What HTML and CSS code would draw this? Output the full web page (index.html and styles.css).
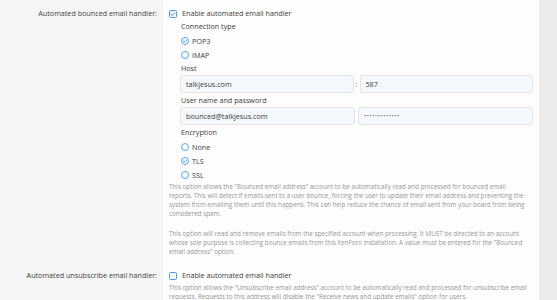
FILE: index.html
```html
<!DOCTYPE html>
<html lang="en">
<head>
<meta charset="utf-8">
<title>Email handler options</title>
<link rel="stylesheet" href="styles.css">
</head>
<body>
<div class="page">
  <dl class="row">
    <dt class="row-label">Automated bounced email handler:</dt>
    <dd class="row-body">
      <label class="check">
        <svg class="box" viewBox="0 0 8 8"><rect x="0.5" y="0.5" width="7" height="7" rx="1" /><path class="tick" d="M1.9 4.1 L3.4 5.5 L6.1 2.6" /></svg>
        <span>Enable automated email handler</span>
      </label>
      <div class="dependent">
        <div class="field-label">Connection type</div>
        <ul class="radios">
          <li><svg class="radio" viewBox="0 0 8 8"><circle cx="4" cy="4" r="3.5" /><path class="tick" d="M2.2 4.1 L3.5 5.3 L5.8 2.9" /></svg>POP3</li>
          <li><svg class="radio" viewBox="0 0 8 8"><circle cx="4" cy="4" r="3.5" /></svg>IMAP</li>
        </ul>
        <div class="field-label">Host</div>
        <div class="input-host">
          <input class="input" type="text" value="talkjesus.com">
          <span class="sep">:</span>
          <input class="input" type="text" value="587">
        </div>
        <div class="field-label spaced">User name and password</div>
        <div class="input-pair">
          <input class="input" type="text" value="bounced@talkjesus.com">
          <input class="input secret" type="password" value="xxxxxxxxxxxxx">
        </div>
        <div class="field-label spaced">Encryption</div>
        <ul class="radios">
          <li><svg class="radio" viewBox="0 0 8 8"><circle cx="4" cy="4" r="3.5" /></svg>None</li>
          <li><svg class="radio" viewBox="0 0 8 8"><circle cx="4" cy="4" r="3.5" /><path class="tick" d="M2.2 4.1 L3.5 5.3 L5.8 2.9" /></svg>TLS</li>
          <li><svg class="radio" viewBox="0 0 8 8"><circle cx="4" cy="4" r="3.5" /></svg>SSL</li>
        </ul>
      </div>
      <p class="explain">This option allows the "Bounced email address" account to be automatically read and processed for bounced email reports. This will detect if emails sent to a user bounce, forcing the user to update their email address and preventing the system from emailing them until this happens. This can help reduce the chance of email sent from your board from being considered spam.</p>
      <p class="explain second">This option will read and remove emails from the specified account when processing. It MUST be directed to an account whose sole purpose is collecting bounce emails from this XenForo installation. A value must be entered for the "Bounced email address" option.</p>
    </dd>
  </dl>
  <dl class="row">
    <dt class="row-label">Automated unsubscribe email handler:</dt>
    <dd class="row-body">
      <label class="check">
        <svg class="box" viewBox="0 0 8 8"><rect x="0.5" y="0.5" width="7" height="7" rx="1" /></svg>
        <span>Enable automated email handler</span>
      </label>
      <p class="explain near">This option allows the "Unsubscribe email address" account to be automatically read and processed for unsubscribe email requests. Requests to this address will disable the "Receive news and update emails" option for users.</p>
    </dd>
  </dl>
</div>
</body>
</html>
```

FILE: styles.css
```css
html, body {
  margin: 0;
  padding: 0;
}

body {
  background: #ebebeb;
  font-family: "Open Sans", "Noto Sans", sans-serif;
  color: #404040;
  height: 300px;
  overflow: hidden;
}

.page {
  width: 539px;
  background: #fdfdfd;
}

.row {
  display: grid;
  grid-template-columns: 163px 1fr;
  margin: 0;
}

.row-label {
  background: #f5f5f5;
  text-align: right;
  padding: 7px 6px 0 0;
  font-size: 7.2px;
  line-height: 13px;
  color: #3f3f3f;
}

.row-body {
  margin: 0;
  padding: 7px 6px 6px 6px;
  font-size: 7.2px;
  line-height: 13px;
}

.check {
  display: flex;
  align-items: center;
  gap: 5px;
  height: 13px;
}

.box,
.radio {
  width: 8px;
  height: 8px;
  flex: none;
}

.box rect {
  fill: #f4f9fd;
  stroke: #4d9fdc;
  stroke-width: 1;
}

.radio {
  margin-right: 3px;
}

.radio circle {
  fill: #f7fbfe;
  stroke: #5ea9df;
  stroke-width: 1;
}

.tick {
  fill: none;
  stroke: #3d92d6;
  stroke-width: 0.9;
  stroke-linecap: round;
  stroke-linejoin: round;
}

.dependent {
  padding-left: 11px;
}

.field-label {
  height: 13px;
  padding-left: 1px;
}

.field-label.spaced {
  margin-top: 1px;
}

.radios {
  list-style: none;
  margin: 0;
  padding: 1px 0 0 1px;
}

.radios li {
  display: flex;
  align-items: center;
  height: 14px;
}

.input-host {
  display: grid;
  grid-template-columns: 1fr 6px 1fr;
  align-items: center;
}

.input-pair {
  display: grid;
  grid-template-columns: 1fr 1fr;
  gap: 3px;
}

.sep {
  text-align: center;
}

.input {
  box-sizing: border-box;
  width: 100%;
  height: 18px;
  margin: 0;
  padding: 0 5px;
  border: 1px solid #dfe5ea;
  border-radius: 3px;
  background: #f5f8fb;
  font-family: "Open Sans", "Noto Sans", sans-serif;
  font-size: 7.2px;
  color: #3a3a3a;
  outline: none;
}

.input.secret {
  font-size: 5px;
  letter-spacing: 0.9px;
  color: #555555;
}

.explain {
  margin: 0;
  font-size: 6.3px;
  line-height: 9px;
  color: #979797;
  padding-right: 4px;
}

.explain.second {
  margin-top: 11px;
}

.explain.near {
  margin-top: 1px;
}
```
